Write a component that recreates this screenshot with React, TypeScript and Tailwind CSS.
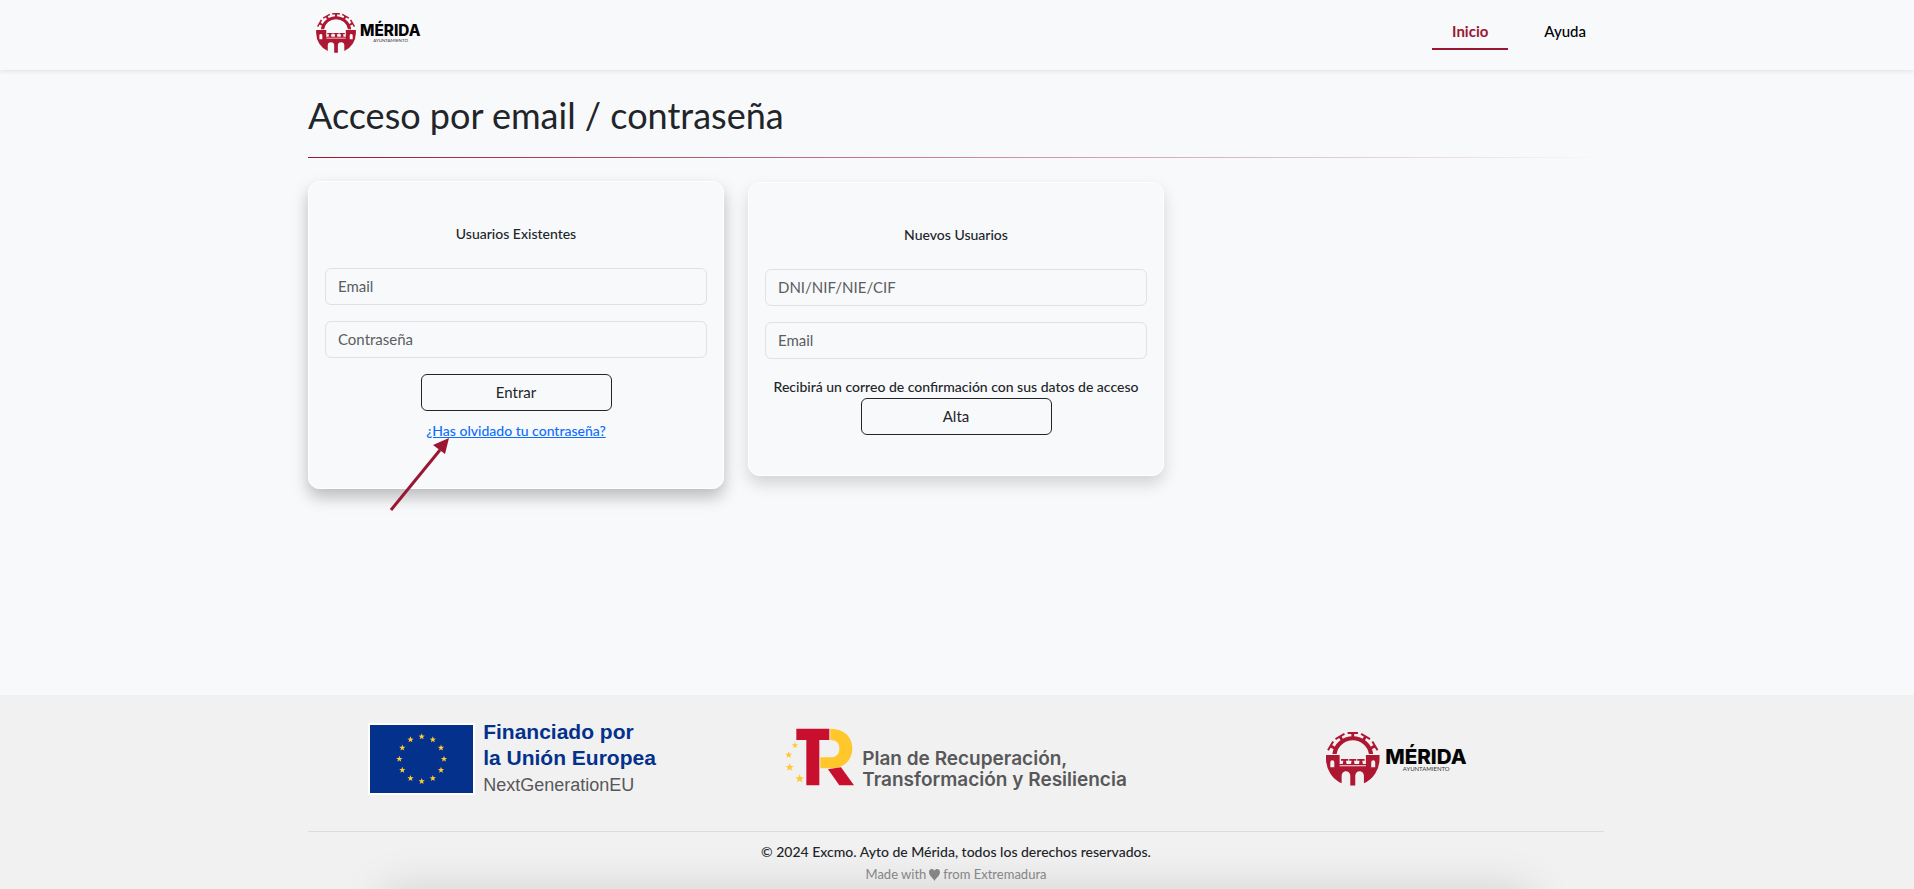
import { InputHTMLAttributes, ReactNode } from "react";

const STAR = "0,-10 2.4,-3.2 9.5,-3.1 3.8,1.2 5.9,8.1 0,4 -5.9,8.1 -3.8,1.2 -9.5,-3.1 -2.4,-3.2"

function MeridaLogo({ className }: { className: string }) {
    return <svg viewBox="0 0 424 162" className={className} role="img" aria-label="Mérida Ayuntamiento">
        <g fill="#ad1732">
            <path d="M19 66A62 61 0 0 1 142 66H129A49 48 0 0 0 32 66Z" />
            {[-60, -30, 0, 30, 60].map((angle) => (
                <path key={angle} transform={`rotate(${angle} 80.5 80)`} d="M65 0H96V6H85L84 19H77L76 6H65Z" />
            ))}
            <path fillRule="evenodd" d="M0 69H41V96H120V69H161V81A81 81 0 0 1 114 154V131A13 13 0 0 0 88 131V161H73V131A13 13 0 0 0 47 131V154A81 81 0 0 1 0 81ZM13 106H25V91A6 6 0 0 0 13 91ZM136 106H148V91A6 6 0 0 0 136 91ZM41 100V103H120V100Z" />
            <path d="M45 81H67V86H60L62 97H50L52 86H45ZM70 81H91V86H84L86 97H75L77 86H70ZM94 81H116V86H109L111 97H99L101 86H94Z" />
        </g>
        <text x="178" y="95" fontFamily="Inter" fontWeight="800" fontSize="62" fill="#050505">MÉRIDA</text>
        <text x="231" y="117" fontFamily="Lato" fontSize="18" fill="#333">AYUNTAMIENTO</text>
    </svg>
}

function EuropeLogo() {
    return <div className="flex items-center gap-2">
        <svg viewBox="0 0 321 216" className="h-[72px] w-[107px]" role="img" aria-label="Unión Europea">
            <rect width="321" height="216" fill="#fff" />
            <rect x="6" y="6" width="309" height="204" fill="#03318c" />
            {Array.from({ length: 12 }, (_, i) => {
                const angle = (i * Math.PI) / 6
                return <polygon key={i} points={STAR} fill="#ffcc33" transform={`translate(${161 + 67 * Math.sin(angle)} ${108 - 67 * Math.cos(angle)})`} />
            })}
        </svg>
        <div className="font-['Liberation_Sans',sans-serif]">
            <p className="text-[21px] leading-[26px] font-bold text-[#03318c]">Financiado por<br />la Unión Europea</p>
            <p className="text-lg leading-[28px] text-[#58585a]">NextGenerationEU</p>
        </div>
    </div>
}

function RecoveryLogo() {
    return <div className="flex items-end gap-2">
        <svg viewBox="0 0 207 174" className="mb-1 h-[58px] w-[69px]" role="img" aria-label="PRTR">
            <path fill="#c8102e" d="M34 2H133V36H103V172H64V36H34Z" />
            <path fill="#ffc72c" d="M136 2C178 2 202 27 202 61C202 97 176 121 138 121H106V88H137C154 88 163 78 163 62C163 46 154 36 136 36Z" />
            <path fill="#c8102e" d="M129 124L168 118L207 172H163Z" />
            <g fill="#ffc72c">
                <polygon points={STAR} transform="translate(30 52)" />
                <polygon points={STAR} transform="translate(11 81) scale(1.1)" />
                <polygon points={STAR} transform="translate(14 118) scale(1.3)" />
                <polygon points={STAR} transform="translate(44 152) scale(1.4)" />
            </g>
        </svg>
        <p className="font-['Inter',sans-serif] text-[19px] leading-[21px] font-semibold text-[#58585a]">Plan de Recuperación,<br />Transformación y Resiliencia</p>
    </div>
}

function Field({ id, label, ...rest }: { id: string, label: string } & InputHTMLAttributes<HTMLInputElement>) {
    return <input id={id} aria-label={label} placeholder={label} className="block w-full rounded-md border border-[#dee2e6] bg-transparent px-3 py-1.5 leading-[23px] text-[#212529] placeholder:text-[#5a5d61]" {...rest} />
}

function SubmitButton({ children }: { children: ReactNode }) {
    return <button type="submit" className="mx-auto w-1/2 rounded-md border border-[#212529] px-3 py-1.5 leading-[23px]">{children}</button>
}

export default function App() {
    return <div className="flex min-h-screen flex-col overflow-hidden bg-[#f8f9fb] font-['Lato',sans-serif] text-[15px] leading-[23px] text-[#212529]">
        <header className="h-[70px] shadow-[0_2px_4px_rgba(0,0,0,0.08)]">
            <div className="mx-auto flex max-w-[1322px] items-start justify-between px-3">
                <a href="#" className="mt-[13px] ml-2"><MeridaLogo className="h-10 w-[105px]" /></a>
                <nav className="mt-5 flex gap-4 text-black">
                    <a href="#" className="border-b-2 border-[#9b1632] px-5 pb-[5px] font-bold text-[#9b1632]">Inicio</a>
                    <a href="#" className="px-5 pb-[5px] font-medium">Ayuda</a>
                </nav>
            </div>
        </header>
        <main className="mx-auto w-full max-w-[1322px] flex-1 pt-6 pr-3.5 pl-3">
            <h1 className="text-4xl leading-[42px]">Acceso por email / contraseña</h1>
            <div className="mt-[21px] mb-[23px] h-px bg-linear-to-r from-[#9b1632] to-transparent" />
            <div className="grid grid-cols-3 items-start gap-6">
                <form className="relative flex flex-col gap-4 rounded-xl border border-white px-4 pt-10 pb-[46px] shadow-[0_8px_16px_rgba(0,0,0,0.25)]">
                    <h2 className="mb-[7px] text-center text-sm leading-[23px] font-medium">Usuarios Existentes</h2>
                    <Field id="login-email" label="Email" type="email" />
                    <Field id="login-password" label="Contraseña" type="password" />
                    <SubmitButton>Entrar</SubmitButton>
                    <a href="#" className="-mt-2 text-center text-sm leading-[23px] font-medium text-[#0d6efd] underline">¿Has olvidado tu contraseña?</a>
                    <svg viewBox="0 0 60 74" className="absolute top-64 left-20 h-[74px] w-[60px]" fill="none" aria-hidden="true">
                        <path d="M2 72L51 12" stroke="#9b1632" strokeWidth="3" />
                        <path d="M60 0L44 7L56 16Z" fill="#9b1632" />
                    </svg>
                </form>
                <form className="mt-px flex flex-col gap-4 rounded-xl border border-white px-4 py-10 shadow-[0_8px_16px_rgba(0,0,0,0.15)]">
                    <h2 className="mb-[7px] text-center text-sm leading-[23px] font-medium">Nuevos Usuarios</h2>
                    <Field id="signup-dni" label="DNI/NIF/NIE/CIF" type="text" />
                    <Field id="signup-email" label="Email" type="email" />
                    <div className="flex flex-col">
                        <p className="text-center text-sm leading-[23px] font-medium">Recibirá un correo de confirmación con sus datos de acceso</p>
                        <SubmitButton>Alta</SubmitButton>
                    </div>
                </form>
            </div>
        </main>
        <footer className="relative bg-[#f1f1f1] pt-6 pb-[3px]">
            <div className="mx-auto max-w-[1322px] pr-3.5 pl-3">
                <div className="grid grid-cols-3 items-center justify-items-center gap-9 pb-8">
                    <EuropeLogo />
                    <RecoveryLogo />
                    <MeridaLogo className="mr-2 h-[54px] w-[141px]" />
                </div>
                <div className="border-t border-[#d8dee4] pt-2 text-center">
                    <p className="text-sm leading-[23px] font-medium">© 2024 Excmo. Ayto de Mérida, todos los derechos reservados.</p>
                    <p className="flex items-center justify-center gap-[3px] text-[13px] text-[#8a8a8a]">
                        Made with
                        <svg viewBox="0 0 11 12" className="h-3 w-[11px]" fill="currentColor" role="img" aria-label="love">
                            <path d="M5.5 12C4.5 9.5 0 7 0 3.3C0 -0.6 4.4 -0.9 5.5 1.8C6.6 -0.9 11 -0.6 11 3.3C11 7 6.5 9.5 5.5 12Z" />
                        </svg>
                        from Extremadura
                    </p>
                </div>
            </div>
            <div className="absolute inset-x-0 top-full mx-auto h-20 w-3/5 shadow-[0_0_45px_rgba(0,0,0,0.13)]" />
        </footer>
    </div>
}
